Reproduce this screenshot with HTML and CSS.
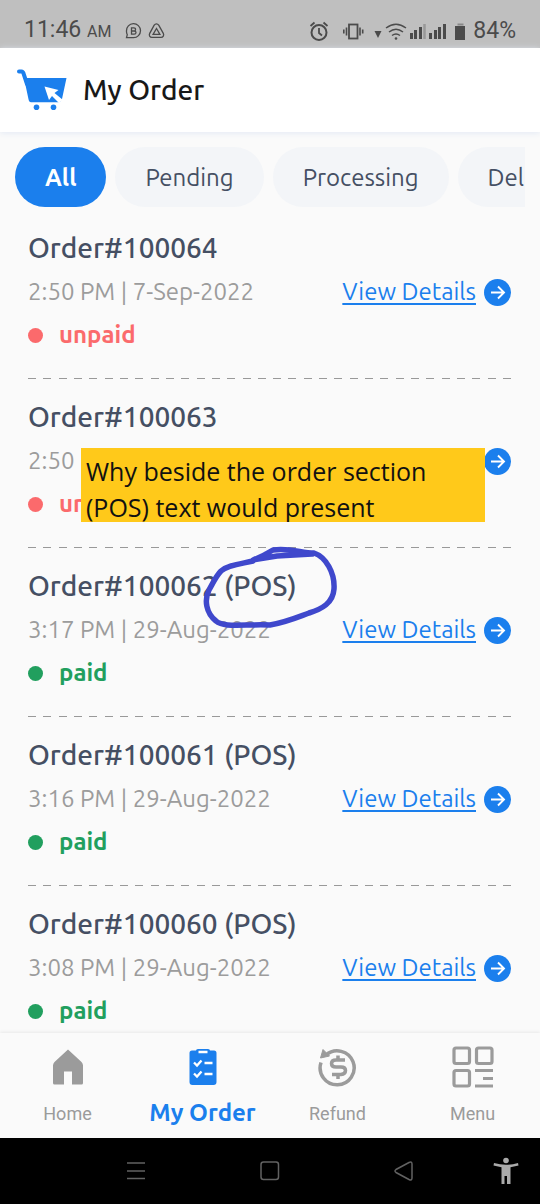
FILE: index.html
```html
<!DOCTYPE html>
<html lang="en">
<head>
<meta charset="utf-8">
<meta name="viewport" content="width=device-width, initial-scale=1">
<title>My Order</title>
<link rel="stylesheet" href="styles.css">
</head>
<body>
<svg class="sprite" aria-hidden="true">
  <symbol id="arrow" viewBox="0 0 27 27">
    <circle cx="13.500" cy="13.500" r="13.500" fill="#1b7fed"/>
    <path d="M7 13.500H20M14 7.500l6 6-6 6" fill="none" stroke="#fff" stroke-width="1.900"/>
  </symbol>
</svg>

<div class="status-bar">
  <span class="clock">11:46 <small>AM</small></span>
  <svg class="notices" width="42" height="16" viewBox="0 0 42 16" fill="none" stroke="#4b4b4b" stroke-width="1.300">
    <path d="M1.500 8a7 7 0 1 1 7 6.700H1.500l.8-3A7 7 0 0 1 1.500 8Z"/>
    <path d="M6.500 4.800v6.400h2.700c2.400 0 2.400-3.200 0-3.200H6.500h2.400c2.200 0 2.200-3.200 0-3.200Z"/>
    <path d="M31.200 2.200c1.200-1.700 3.300-1.700 4.500 0l4.600 8.200c1 2-.2 4-2.300 4h-9c-2.200 0-3.300-2-2.300-4Z" transform="translate(-2)"/>
    <path d="m31.500 5.500 3.400 5.800h-6.800Z"/>
  </svg>
  <svg class="signals" width="156" height="22" viewBox="310 18 156 22" fill="none" stroke="#4b4b4b">
    <circle cx="320" cy="30.500" r="7.500" stroke-width="2"/>
    <path d="M320 26v5l3 2.500M311.500 24l4-3.500M328.500 24l-4-3.500" stroke-width="1.800"/>
    <rect x="350" y="22.500" width="8.500" height="14" stroke-width="1.800"/>
    <path d="M347.500 25.500v8M344.800 27.500v4M361 25.500v8M363.700 27.500v4" stroke-width="1.600"/>
    <path d="M375.500 29h7l-3.500 7Z" fill="#4b4b4b" stroke="none"/>
    <path d="M387 26q10-7.500 20 0M390 30q7-5.500 14 0M393 33.500q4-3 8 0" stroke-width="1.500"/>
    <circle cx="397" cy="36.500" r="1.300" fill="#4b4b4b" stroke="none"/>
    <path d="M412.500 31v6M416.500 28v9M421.500 25v12M431.500 31v6M436.500 28v9M440.500 25v12M445.500 22v15" stroke-width="3"/>
    <path d="M425.500 22v15" stroke="#999" stroke-width="2.500"/>
    <path d="M456 24h10v14h-10Z" fill="#4b4b4b" stroke="none"/>
    <path d="M458.500 22.500h6" stroke="#888" stroke-width="2"/>
  </svg>
  <span class="battery">84%</span>
</div>

<header class="app-header">
  <svg width="50" height="42" viewBox="17 69 50 42" aria-hidden="true">
    <path d="M19 71.500h2.500q1.500 0 2 2L27 84" fill="none" stroke="#1b7fed" stroke-width="4" stroke-linecap="round"/>
    <path d="M24 78h42.500L62 99q-.6 3.300-3.500 3.300H31q-2 0-2.500-3Z" fill="#1b7fed"/>
    <circle cx="36.500" cy="107.300" r="2.800" fill="#1b7fed"/>
    <circle cx="53.500" cy="107.300" r="2.800" fill="#1b7fed"/>
    <path d="m44.500 86.500 14 3.500-4 3 8.500 7-4 3-7-7-3 4Z" fill="#fff"/>
  </svg>
  <h1>My Order</h1>
</header>

<main>
  <div class="filters">
    <button class="chip chip-active" type="button">All</button>
    <button class="chip" type="button">Pending</button>
    <button class="chip" type="button">Processing</button>
    <button class="chip" type="button">Delivered</button>
  </div>

  <div class="orders">
    <article class="order">
      <h2>Order#100064</h2>
      <div class="meta"><span>2:50 PM | 7-Sep-2022</span><a href="#o64"><span>View Details</span><svg><use href="#arrow"/></svg></a></div>
      <p class="pay unpaid">unpaid</p>
    </article>
    <article class="order">
      <h2>Order#100063</h2>
      <div class="meta"><span>2:50 PM | 7-Sep-2022</span><a href="#o63"><span>View Details</span><svg><use href="#arrow"/></svg></a></div>
      <p class="pay unpaid">unpaid</p>
      <div class="note">Why beside the order section<br>(POS) text would present</div>
    </article>
    <article class="order">
      <h2>Order#100062 (POS)</h2>
      <div class="meta"><span>3:17 PM | 29-Aug-2022</span><a href="#o62"><span>View Details</span><svg><use href="#arrow"/></svg></a></div>
      <p class="pay paid">paid</p>
      <svg class="scribble" viewBox="200 544 140 90" fill="none" stroke="#3f48cc" stroke-width="5.500" stroke-linecap="round" stroke-linejoin="round" aria-hidden="true">
        <path d="M253 561C240 564 228 565 221 571C216 576 213 583 209 590C204 600 206 613 216 621C224 628 243 624 270 625C287 622 298 617 309 613C322 609 333 603 334 589C335 573 326 557 314 553C301 553 292 548 273 550C268 553 261 557 253 560L277 556L312 554"/>
      </svg>
    </article>
    <article class="order">
      <h2>Order#100061 (POS)</h2>
      <div class="meta"><span>3:16 PM | 29-Aug-2022</span><a href="#o61"><span>View Details</span><svg><use href="#arrow"/></svg></a></div>
      <p class="pay paid">paid</p>
    </article>
    <article class="order">
      <h2>Order#100060 (POS)</h2>
      <div class="meta"><span>3:08 PM | 29-Aug-2022</span><a href="#o60"><span>View Details</span><svg><use href="#arrow"/></svg></a></div>
      <p class="pay paid">paid</p>
    </article>
  </div>
</main>

<nav class="tabs">
  <a href="#home">
    <svg viewBox="0 0 42 42"><path d="M21 3.500 34.500 16q1.500 1.500 1.500 3.500V37q0 1.500-1.500 1.500H25V25.500h-8v13H7.500Q6 38.500 6 37V19.500q0-2 1.500-3.500Z" fill="#9b9b9b"/></svg>
    <span>Home</span>
  </a>
  <a href="#orders" class="current" aria-current="page">
    <svg viewBox="0 0 42 42"><path d="M14 4.500q0-1.500 2-1.500h10q2 0 2 1.500h4q2.500 0 2.500 2.500v29q0 3-3 3h-21q-3 0-3-3V7q0-2.500 2.500-2.500Z" fill="#1b7fed"/><path d="M16.500 6h9M22.500 17h8M22.500 28h8M12 16.500l3 3 4.500-5M12 27.500l3 3 4.500-5" fill="none" stroke="#fff" stroke-width="2.300"/></svg>
    <span>My Order</span>
  </a>
  <a href="#refund">
    <svg viewBox="0 0 42 42" fill="none" stroke="#9b9b9b" stroke-width="3.500"><path d="M4 16.500A17 17 0 1 0 9 9"/><path d="m6 3.500-2.500 8.500 9-2Z" fill="#9b9b9b" stroke-width="1"/><path d="M28 14h-9q-4.500 0-4.500 3.500T19 21h5q4.500 0 4.500 3.500T24 28.500h-9M21 9.500V14M21 28v5"/></svg>
    <span>Refund</span>
  </a>
  <a href="#menu">
    <svg viewBox="0 0 42 42" fill="none" stroke="#9b9b9b" stroke-width="3.200"><rect x="2" y="2" width="15.500" height="15.500" rx="2"/><rect x="24.500" y="2" width="15.500" height="15.500" rx="2"/><rect x="2" y="24.500" width="15.500" height="15.500" rx="2"/><path d="M23 24.500h18M31 32.500h10M23 40h18"/></svg>
    <span>Menu</span>
  </a>
</nav>

<div class="system-bar">
  <button type="button" aria-label="Recent apps"><svg viewBox="0 0 30 30"><path d="M6 7h18M6 15h18M6 22.500h18" fill="none" stroke="#626262" stroke-width="1.500"/></svg></button>
  <button type="button" aria-label="Home screen"><svg viewBox="0 0 30 30"><rect x="6" y="6" width="17.500" height="17.500" rx="2.500" fill="none" stroke="#626262" stroke-width="1.500"/></svg></button>
  <button type="button" aria-label="Back"><svg viewBox="0 0 30 30"><path d="M20 6.500Q23 5 23 8v14q0 3-3 1.500L7 16.500q-2-1.500 0-3Z" fill="none" stroke="#626262" stroke-width="1.500"/></svg></button>
  <button type="button" class="access" aria-label="Accessibility"><svg viewBox="0 0 30 30"><circle cx="15" cy="4.500" r="2.800" fill="#aaa"/><path d="M3 7q12 3.500 24 0l.5 2.500-8 1.800V28h-3.500v-8h-2.500v8H10.500V11.300L2.500 9.500Z" fill="#aaa"/></svg></button>
</div>
</body>
</html>
```

FILE: styles.css
```css
* { box-sizing: border-box; }

body {
  margin: 0;
  height: 100vh;
  display: flex;
  flex-direction: column;
  background: #fafafa;
  color: #454f63;
  font-family: Ubuntu, "Noto Sans", sans-serif;
}

h1, h2, p { margin: 0; }
button { border: 0; padding: 0; font: inherit; color: inherit; }
svg { display: block; flex: none; }
.sprite { position: absolute; width: 0; height: 0; }

.status-bar {
  flex: none;
  display: flex;
  align-items: center;
  height: 48px;
  padding: 13px 24px 0;
  background: #bfbfbf;
  color: #4b4b4b;
  font: 23px/36px Roboto, sans-serif;
}
.status-bar small { font-size: 16px; }
.notices { margin-left: 14px; }
.signals { margin-left: auto; }
.battery { margin-left: 8px; }

.app-header {
  flex: none;
  position: relative;
  display: flex;
  align-items: center;
  gap: 16px;
  height: 84px;
  padding: 0 17px;
  background: #fff;
  box-shadow: 0 1px 6px #e2e9f4;
}
.app-header h1 {
  color: #181818;
  font-size: 28px;
  font-weight: 500;
  line-height: 36px;
}

main { flex: 1; min-height: 0; overflow: hidden; }

.filters {
  display: flex;
  gap: 9px;
  margin: 15px 15px 0;
  overflow: hidden;
}
.chip {
  flex: none;
  height: 60px;
  padding: 0 30px;
  border-radius: 30px;
  background: #f3f5f8;
  font-size: 24px;
}
.chip-active { background: #1b7fed; color: #fff; font-weight: 700; }

.orders { padding: 3px 29px 0 28px; }
.order {
  position: relative;
  padding: 20px 0 27px;
}
.order::after {
  content: "";
  display: block;
  position: absolute;
  inset: auto 0 0;
  height: 1px;
  background: repeating-linear-gradient(to right, #999 0 8px, transparent 8px calc((100% - 8px) / 31));
}
.order h2 { font-size: 28px; font-weight: 500; line-height: 36px; }
.meta {
  display: flex;
  align-items: center;
  justify-content: space-between;
  margin: 8px 0;
  color: #9c9c9c;
  font-size: 24px;
  line-height: 36px;
}
.meta a {
  display: flex;
  align-items: center;
  gap: 8px;
  color: #1b7fed;
  text-decoration: none;
}
.meta a span { text-decoration: underline; text-decoration-thickness: 2px; text-underline-offset: 3px; text-decoration-skip-ink: none; }
.meta a svg { width: 27px; height: 27px; }

.pay {
  display: flex;
  align-items: center;
  gap: 16px;
  font-size: 24px;
  font-weight: 700;
  line-height: 34px;
}
.pay::before { content: ""; width: 15px; height: 15px; border-radius: 50%; background: currentColor; }
.unpaid { color: #fb6a6c; }
.paid { color: #219f5e; }

.note {
  position: absolute;
  z-index: 1;
  top: 69px;
  left: 53px;
  right: 26px;
  height: 74px;
  padding: 5px 5px 0;
  overflow: hidden;
  background: #ffc91a;
  color: #111;
  font: 25px/36px "Open Sans", sans-serif;
  white-space: nowrap;
}
.scribble { position: absolute; top: -4px; left: 172px; width: 140px; height: 90px; }

.tabs {
  flex: none;
  position: relative;
  display: grid;
  grid-template-columns: repeat(4, 1fr);
  height: 105px;
  background: #fafafa;
  box-shadow: 0 -1px 3px #e8e8e8;
}
.tabs a {
  display: flex;
  flex-direction: column;
  align-items: center;
  gap: 8px;
  padding-top: 13px;
  color: #9b9b9b;
  font: 18px/36px Roboto, sans-serif;
  text-decoration: none;
}
.tabs svg { width: 42px; height: 42px; }
.tabs .current { color: #1b7fed; font: 700 24px/34px Ubuntu, "Noto Sans", sans-serif; }

.system-bar {
  flex: none;
  position: relative;
  display: flex;
  justify-content: center;
  align-items: center;
  gap: 104px;
  height: 66px;
  background: #000;
}
.system-bar button { background: none; }
.system-bar svg { width: 30px; height: 30px; }
.system-bar .access { position: absolute; right: 19px; }
```
